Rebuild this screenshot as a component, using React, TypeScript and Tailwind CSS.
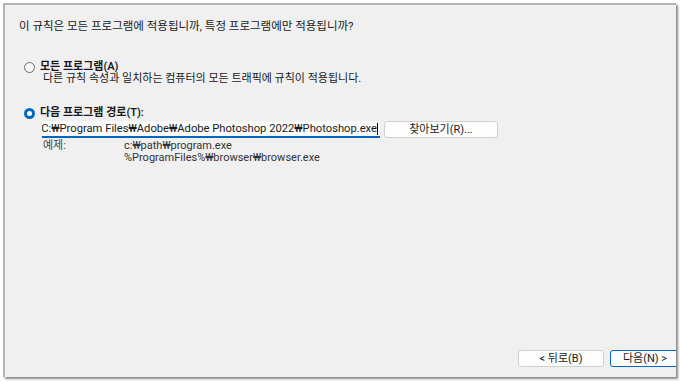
import React from "react";

const font = { fontFamily: 'Roboto, "Noto Sans CJK KR", sans-serif' };

const Radio = ({ checked }: { checked?: boolean }) =>
  checked ? (
    <span className="w-[11px] h-[11px] rounded-full bg-[#0067c0] flex items-center justify-center shrink-0">
      <span className="w-[5px] h-[5px] rounded-full bg-white" />
    </span>
  ) : (
    <span className="w-[11px] h-[11px] rounded-full border border-[#6e6e6e] bg-[#f6f6f6] shrink-0" />
  );

export default function App() {
  return (
    <div className="w-[680px] h-[382px] bg-white relative overflow-hidden text-[#1a1a1a]" style={font}>
      <div className="absolute left-[3px] top-[3px] w-[673px] h-[374px] bg-[#f0f0f0] border-t-2 border-l-2 border-[#b4b4b4] shadow-[2px_2px_2px_#8a8a8a] flex flex-col overflow-hidden">
        <div className="pl-[14px] pt-[14px] text-[11.5px] leading-[14px]">
          이 규칙은 모든 프로그램에 적용됩니까, 특정 프로그램에만 적용됩니까?
        </div>

        <div className="pl-[19px] mt-[28px] flex flex-col">
          <div className="flex items-center gap-[5px] h-[12px]">
            <Radio />
            <span className="text-[11px] font-semibold leading-[12px]">모든 프로그램(A)</span>
          </div>
          <div className="pl-[19px] text-[11px] leading-[11px] mt-[0px]">
            다른 규칙 속성과 일치하는 컴퓨터의 모든 트래픽에 규칙이 적용됩니다.
          </div>

          <div className="flex items-center gap-[5px] h-[14px] mt-[22px]">
            <Radio checked />
            <span className="text-[11px] font-semibold leading-[14px]">다음 프로그램 경로(T):</span>
          </div>

          <div className="pl-[18px] flex items-center gap-[4px] mt-[1px]">
            <div className="w-[338px] h-[17px] bg-[#fcfcfc] border-b-2 border-[#0067c0] overflow-hidden flex items-center justify-end pr-[2px]">
              <span className="whitespace-nowrap text-[11.2px] leading-[14px] shrink-0">
                C:₩Program Files₩Adobe₩Adobe Photoshop 2022₩Photoshop.exe
              </span>
              <span className="w-px h-[12px] bg-black shrink-0" />
            </div>
            <button className="w-[114px] h-[17px] bg-[#fdfdfd] border border-[#d0d0d0] rounded-[3px] text-[11px] leading-[14px]">
              찾아보기(R)...
            </button>
          </div>

          <div className="pl-[19px] flex mt-[2px] text-[11px] leading-[11.5px]">
            <span className="w-[81px] text-[#444]">예제:</span>
            <div className="flex flex-col text-[#333]">
              <span>c:₩path₩program.exe</span>
              <span>%ProgramFiles%₩browser₩browser.exe</span>
            </div>
          </div>
        </div>

        <div className="mt-auto mb-[10px] flex justify-end gap-[6px] mr-[-4px]">
          <button className="w-[86px] h-[17px] bg-[#fdfdfd] border border-[#d0d0d0] rounded-[3px] text-[11px] leading-[14px]">
            &lt; 뒤로(B)
          </button>
          <button className="w-[70px] h-[17px] bg-[#fdfdfd] border border-[#0067c0] rounded-[3px] text-[11px] leading-[14px]">
            다음(N) &gt;
          </button>
        </div>
      </div>
    </div>
  );
}
